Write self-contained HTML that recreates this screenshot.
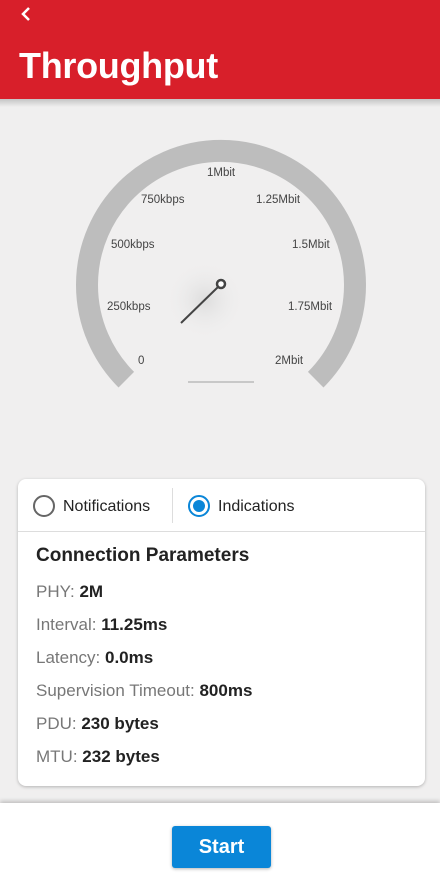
<!DOCTYPE html>
<html><head><style>
body{margin:0;width:440px;height:875px;overflow:hidden;background:#f0efef;font-family:"Liberation Sans",sans-serif;position:relative}
.hdr{position:absolute;left:0;top:0;width:440px;height:99px;background:#d81f2a}
.sh{position:absolute;left:0;top:99px;width:440px;height:8px;background:linear-gradient(#c4c4c4,#f0efef)}
.t{position:absolute;left:19px;top:45px;color:#fff;font-size:36px;font-weight:bold;letter-spacing:-0.3px}
.lbl{position:absolute;font-size:11.5px;color:#444;white-space:nowrap}
.card{position:absolute;left:18px;top:479px;width:407px;height:307px;background:#fff;border-radius:8px;box-shadow:0 1px 3px rgba(0,0,0,.25)}
.row{position:absolute;left:18px;font-size:17px;color:#777}
.row b{color:#222}
.bot{position:absolute;left:0;top:803px;width:440px;height:72px;background:#fff;box-shadow:0 -2px 4px rgba(0,0,0,.2)}
.btn{position:absolute;left:172px;top:826px;width:99px;height:42px;background:#0a86d8;border-radius:3px;color:#fff;font-weight:bold;font-size:20px;text-align:center;line-height:42px;box-shadow:0 1px 3px rgba(0,0,0,.3)}
</style></head><body>
<div class="hdr"></div><div class="sh"></div>
<svg style="position:absolute;left:18px;top:5px" width="14" height="18"><path d="M11 3 L5 9 L11 15" stroke="#fff" stroke-width="2.5" fill="none"/></svg>
<div class="t">Throughput</div>
<svg style="position:absolute;left:0;top:0" width="440" height="470">
<defs><radialGradient id="g"><stop offset="0" stop-color="#ddd"/><stop offset="1" stop-color="#f0efef" stop-opacity="0"/></radialGradient></defs>
<circle cx="205" cy="300" r="40" fill="url(#g)"/>
<path d="M126.3 379.7 A134 134 0 1 1 315.7 379.7" stroke="#bdbdbd" stroke-width="22" fill="none"/>
<line x1="188" y1="382" x2="254" y2="382" stroke="#c8c8c8" stroke-width="2"/>
<line x1="181" y1="323" x2="218" y2="287" stroke="#444" stroke-width="2"/>
<circle cx="221" cy="284" r="4" fill="#fff" stroke="#444" stroke-width="2.5"/>
</svg>
<div class="lbl" style="left:207px;top:167px">1Mbit</div>
<div class="lbl" style="left:141px;top:194px">750kbps</div>
<div class="lbl" style="left:256px;top:194px">1.25Mbit</div>
<div class="lbl" style="left:111px;top:239px">500kbps</div>
<div class="lbl" style="left:292px;top:239px">1.5Mbit</div>
<div class="lbl" style="left:107px;top:301px">250kbps</div>
<div class="lbl" style="left:288px;top:301px">1.75Mbit</div>
<div class="lbl" style="left:138px;top:355px">0</div>
<div class="lbl" style="left:275px;top:355px">2Mbit</div>
<div class="card">
<svg style="position:absolute;left:14px;top:16px" width="200" height="24"><circle cx="12" cy="11" r="10" fill="none" stroke="#666" stroke-width="2"/><circle cx="167" cy="11" r="10" fill="none" stroke="#0a86d8" stroke-width="2"/><circle cx="167" cy="11" r="6" fill="#0a86d8"/></svg>
<div style="position:absolute;left:45px;top:19px;font-size:16px;color:#222">Notifications</div>
<div style="position:absolute;left:154px;top:9px;width:1px;height:35px;background:#ddd"></div>
<div style="position:absolute;left:200px;top:19px;font-size:16px;color:#222">Indications</div>
<div style="position:absolute;left:0;top:52px;width:407px;height:1px;background:#ddd"></div>
<div style="position:absolute;left:18px;top:66px;font-size:19px;font-weight:bold;color:#222">Connection Parameters</div>
<div class="row" style="top:103px">PHY: <b>2M</b></div>
<div class="row" style="top:136px">Interval: <b>11.25ms</b></div>
<div class="row" style="top:169px">Latency: <b>0.0ms</b></div>
<div class="row" style="top:202px">Supervision Timeout: <b>800ms</b></div>
<div class="row" style="top:235px">PDU: <b>230 bytes</b></div>
<div class="row" style="top:268px">MTU: <b>232 bytes</b></div>
</div>
<div class="bot"></div>
<div class="btn">Start</div>
</body></html>
